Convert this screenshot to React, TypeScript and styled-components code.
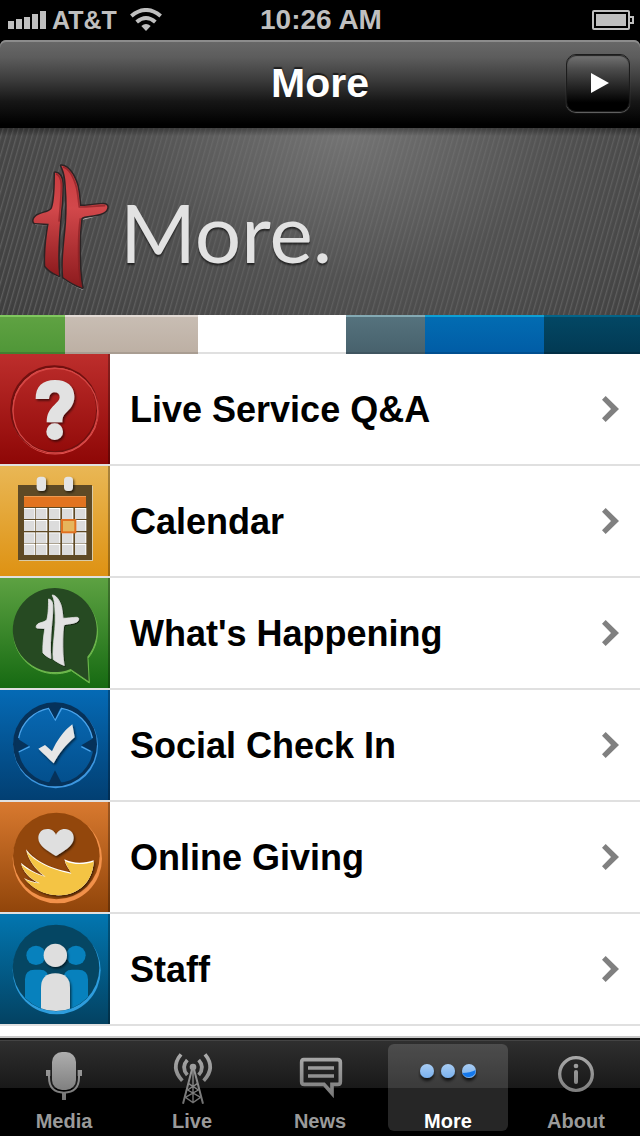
import React from "react";
import styled, { createGlobalStyle } from "styled-components";

const GlobalStyle = createGlobalStyle`
  * { box-sizing: border-box; }
  body {
    margin: 0;
    background: #000;
    font-family: "Liberation Sans", Arial, sans-serif;
  }
`;

const Screen = styled.div`
  display: flex;
  flex-direction: column;
  height: 100vh;
  background: #000;
`;

const StatusBar = styled.div`
  flex: none;
  display: grid;
  grid-template-columns: 1fr auto 1fr;
  align-items: center;
  height: 40px;
  padding: 0 6px 0 8px;
  color: #bfbfbf;
  font-size: 28px;
  font-weight: bold;
`;

const Carrier = styled.div`
  display: flex;
  align-items: center;
  gap: 6px;
  font-size: 25px;
`;

const WifiIcon = styled.svg`
  margin-left: 7px;
`;

const BatteryIcon = styled.svg`
  justify-self: end;
`;

const NavBar = styled.header`
  flex: none;
  display: grid;
  grid-template-columns: 1fr auto 1fr;
  align-items: center;
  height: 88px;
  padding: 0 10px 2px;
  border-radius: 6px 6px 0 0;
  background: linear-gradient(#696969, #5c5c5c 20%, #3c3c3c 45%, #161616 70%, #000 96%);
  box-shadow: inset 0 2px 0 #8c8c8c;
`;

const NavTitle = styled.h1`
  grid-column: 2;
  margin: 0;
  color: #fff;
  font-size: 41px;
  line-height: 48px;
  text-shadow: 0 -2px 1px rgba(0, 0, 0, 0.6);
`;

const PlayButton = styled.button`
  justify-self: end;
  display: grid;
  place-items: center;
  width: 64px;
  height: 58px;
  padding: 0 0 0 3px;
  border: 1px solid #1c1c1c;
  border-radius: 10px;
  background: linear-gradient(#747474, #4c4c4c 25%, #202020 60%, #000 85%);
  box-shadow: 0 1px 1px #6a6a6a, inset 0 1px 1px #222;
`;

const Banner = styled.section`
  flex: none;
  display: flex;
  align-items: center;
  height: 187px;
  padding: 6px 20px 0;
  background:
    linear-gradient(rgba(0, 0, 0, 0.35), transparent 8px),
    radial-gradient(ellipse 420px 300px at 54% 0, rgba(126, 126, 126, 0.85), rgba(94, 94, 94, 0.6) 50%, rgba(74, 74, 74, 0.1)),
    repeating-linear-gradient(106deg, #3e3e3e 0 2px, #606060 3px, #484848 4px, #3e3e3e 5px);
`;

const BannerTitle = styled.h2`
  margin: 0;
  padding-top: 12px;
  color: #e2e2e2;
  font-family: Lato, "Liberation Sans", sans-serif;
  font-size: 82px;
  font-weight: 400;
  line-height: 96px;
  text-shadow: 0 2px 2px rgba(0, 0, 0, 0.6);
`;

const Strip = styled.div`
  flex: none;
  display: flex;
  height: 39px;
`;

const Swatch = styled.div<{ $span: number; $edge: string; $from: string; $to: string; $base: string }>`
  flex: ${(p) => p.$span} 1 0;
  border-top: 2px solid ${(p) => p.$edge};
  border-bottom: 2px solid ${(p) => p.$base};
  background: linear-gradient(${(p) => p.$from}, ${(p) => p.$to});
`;

const Menu = styled.ul`
  flex: 1 1 0;
  min-height: 0;
  overflow: hidden;
  margin: 0;
  padding: 0;
  list-style: none;
  background: #fff;
`;

const MenuItem = styled.li`
  border-bottom: 2px solid #e0e0e0;
`;

const MenuLink = styled.a`
  display: flex;
  align-items: center;
  gap: 20px;
  padding-right: 20px;
  color: #000;
  text-decoration: none;
`;

const IconTile = styled.span<{ $from: string; $to: string }>`
  flex: none;
  display: block;
  width: 110px;
  height: 110px;
  background: linear-gradient(${(p) => p.$from}, ${(p) => p.$to});
  box-shadow: inset -2px 0 0 rgba(0, 0, 0, 0.28);
`;

const TileArt = styled.svg`
  display: block;
  width: 110px;
  height: 110px;
`;

const MenuLabel = styled.span`
  flex: 1;
  padding-top: 2px;
  font-size: 36px;
  font-weight: bold;
  line-height: 44px;
`;

const TabBar = styled.nav`
  flex: none;
  display: flex;
  height: 100px;
  padding: 8px 0 5px;
  background: linear-gradient(
    #c8c8c8 0 2px,
    #141414 2px 4px,
    #444 4px 5px,
    #2f2f2f 5px,
    #191919 52px,
    #000 52px
  );
`;

const Tab = styled.a<{ $active?: boolean }>`
  flex: 1 1 0;
  display: flex;
  flex-direction: column;
  align-items: center;
  margin: 0 4px;
  padding-top: 2px;
  border-radius: 6px;
  color: ${(p) => (p.$active ? "#fff" : "#9a9a9a")};
  background: ${(p) => (p.$active ? "rgba(255, 255, 255, 0.15)" : "none")};
  font-size: 20px;
  font-weight: bold;
  line-height: 20px;
  text-decoration: none;
`;

const TabArt = styled.svg`
  flex: none;
  display: block;
  width: 60px;
  height: 60px;
  margin-bottom: 5px;
`;

const CROSS_RIGHT =
  "M124 32C145 33 163 60 172 92C177 112 178 135 180 153C200 154 230 148 250 148C262 148 264 155 260 163C258 172 240 178 220 181C205 183 190 184 184 190C178 230 178 290 180 340C182 370 184 385 187 398C170 393 145 378 130 367C126 330 130 290 134 250C140 200 142 150 138 100C137 75 135 55 124 32Z";
const CROSS_LEFT =
  "M105 53C117 54 126 65 127 85C128 120 124 160 120 200C116 250 112 310 117 362C105 357 85 345 76 333C74 300 78 250 86 206L44 204C38 200 40 190 50 182C70 172 90 172 96 160C103 140 105 100 105 53Z";

const Logo = () => (
  <svg width="100" height="140" viewBox="0 0 300 420" aria-hidden="true">
    <defs>
      <linearGradient id="logoRed" x1="0" y1="0" x2="0" y2="1">
        <stop offset="0" stopColor="#c83c40" />
        <stop offset="0.35" stopColor="#d2484b" />
        <stop offset="1" stopColor="#8c1a1d" />
      </linearGradient>
    </defs>
    <g fill="none" stroke="#a8a8a8" strokeWidth="4" strokeLinecap="round">
      <path d="M46 208L84 209M190 192C205 188 240 182 258 170M132 371C150 384 170 396 188 402M80 338C92 350 105 360 117 365" />
    </g>
    <g fill="url(#logoRed)" stroke="#2c2425" strokeWidth="9" strokeLinejoin="round" paintOrder="stroke">
      <path d={CROSS_LEFT} />
      <path d={CROSS_RIGHT} />
    </g>
    <g fill="none" stroke="#7e1c20" strokeWidth="5" opacity="0.6">
      <path d="M108 56C120 62 124 75 124 90C124 120 120 165 117 200" />
      <path d="M129 36C148 41 161 68 169 96C174 115 175 140 178 156C200 157 230 152 256 152" />
      <path d="M181 190C175 230 175 290 177 340L183 394" />
    </g>
  </svg>
);

const Relief = () => (
  <filter id="relief" x="-20%" y="-20%" width="150%" height="150%">
    <feDropShadow dx="4" dy="5" stdDeviation="3" floodColor="#000" floodOpacity="0.6" />
  </filter>
);

const QuestionArt = () => (
  <TileArt viewBox="0 12 330 330" aria-hidden="true">
    <defs>
      <Relief />
    </defs>
    <circle cx="165" cy="182" r="129" fill="none" stroke="#e0504e" strokeWidth="5" />
    <circle cx="163" cy="178" r="129" fill="none" stroke="#72100f" strokeWidth="7" />
    <circle cx="166" cy="182" r="127" fill="none" stroke="#d64644" strokeWidth="4" />
    <g fill="#e2e2e2" filter="url(#relief)">
      <path d="M107 147C106 110 128 90 165 90C200 90 223 108 223 140C223 165 208 178 198 188C190 196 187 203 187 217L140 217C140 190 150 178 163 165C172 156 179 150 179 142C179 132 173 127 164 127C154 127 148 134 147 147Z" />
      <circle cx="164" cy="245" r="25" />
    </g>
  </TileArt>
);

const CELL_X = [72, 108, 147, 186, 225];
const CELL_Y = [474, 510, 547, 582];

const CalendarArt = () => (
  <TileArt viewBox="0 348 330 330" aria-hidden="true">
    <path d="M57 408H279V633H57Z" fill="#d9cba8" />
    <path d="M54 405H276V630H54Z" fill="#5f4a25" />
    <path d="M72 438H258V471H72Z" fill="#e27420" />
    <path d="M72 438H258V441H72Z" fill="#f09a50" />
    {CELL_Y.map((y) =>
      CELL_X.map((x) => (
        <g key={`${x}-${y}`}>
          <rect x={x} y={y} width="34" height="33" fill="#fff" />
          <rect x={x} y={y + 3} width="31" height="30" fill="#dcdcdc" />
        </g>
      ))
    )}
    <rect x="186" y="510" width="40" height="37" fill="#e6b55c" stroke="#e07020" strokeWidth="6" />
    <g fill="#e4e4e4" filter="url(#relief)">
      <rect x="110" y="380" width="28" height="43" rx="11" />
      <rect x="192" y="380" width="27" height="43" rx="11" />
    </g>
  </TileArt>
);

const BUBBLE = "M262 242A126 126 0 1 0 212 279L266 316Z";

const HappeningArt = () => (
  <TileArt viewBox="0 6 330 330" aria-hidden="true">
    <path d={BUBBLE} transform="translate(2 5)" fill="#6cb74c" stroke="#6cb74c" strokeWidth="3" />
    <path d={BUBBLE} fill="#264a22" />
    <g transform="translate(85 38.5) scale(0.577)" fill="#e2e2e2" stroke="#e2e2e2" strokeWidth="4" filter="url(#relief)">
      <path d={CROSS_LEFT} />
      <path d={CROSS_RIGHT} />
    </g>
  </TileArt>
);

const CheckInArt = () => (
  <TileArt viewBox="0 342 330 330" aria-hidden="true">
    <defs>
      <linearGradient id="dial" x1="0" y1="0" x2="0" y2="1">
        <stop offset="0" stopColor="#0868b2" />
        <stop offset="1" stopColor="#034f8c" />
      </linearGradient>
    </defs>
    <circle cx="167" cy="510" r="127" fill="#3d97e0" />
    <circle cx="165" cy="505" r="126" fill="#06325a" />
    <circle cx="167" cy="508" r="113" fill="url(#dial)" />
    <g fill="none" stroke="#4ba3ea" strokeWidth="4">
      <path d="M56 486A113 113 0 0 1 146 397L166 432L185 397A113 113 0 0 1 277 486" />
      <path d="M56 528L89 512M244 512L272 526" />
    </g>
    <g fill="#06325a">
      <path d="M144 390L165 429L184 390Z" />
      <path d="M146 622L165 583L185 622Z" />
      <path d="M46 484L86 509L46 530Z" />
      <path d="M285 484L244 508L285 530Z" />
    </g>
    <path
      d="M115 518L135 507L156 526C170 495 190 465 217 445L224 484C198 505 177 533 161 562C146 548 132 534 115 518Z"
      fill="#e6e6e6"
      filter="url(#relief)"
    />
  </TileArt>
);

const WING =
  "M78 148C100 178 140 203 214 218C205 206 197 195 193 178C220 192 255 190 281 181C280 240 240 286 175 286C130 284 95 262 72 234C85 242 100 246 114 248C90 235 68 215 63 188C85 208 110 220 132 228C105 207 85 180 78 148Z";

const GivingArt = () => (
  <TileArt viewBox="0 6 330 330" aria-hidden="true">
    <circle cx="172" cy="176" r="134" fill="#f2914a" />
    <circle cx="169" cy="168" r="130" fill="#93470c" />
    <path d={WING} fill="#fff" filter="url(#relief)" />
    <path
      d="M80 155C105 184 148 208 214 221C208 209 200 198 195 183C222 196 254 194 281 185C279 240 240 286 175 286C130 285 96 264 74 237C88 244 104 250 120 250C94 238 72 219 64 194C86 212 112 224 137 230C110 211 89 186 80 155Z"
      fill="#f4c444"
    />
    <path
      d="M168 168C145 154 115 138 115 114C115 97 127 87 142 87C156 87 165 95 168 105C171 95 181 87 195 87C210 87 221 98 221 114C221 138 191 154 168 168Z"
      fill="#dfdfdf"
      filter="url(#relief)"
    />
  </TileArt>
);

const StaffArt = () => (
  <TileArt viewBox="0 342 330 330" aria-hidden="true">
    <defs>
      <clipPath id="staffDisc">
        <circle cx="168" cy="503" r="130" />
      </clipPath>
    </defs>
    <circle cx="170" cy="511" r="132" fill="#2e9ddd" />
    <circle cx="168" cy="504" r="130" fill="#054663" />
    <g clipPath="url(#staffDisc)" fill="#0781bd">
      <circle cx="108" cy="466" r="29" />
      <circle cx="228" cy="466" r="29" />
      <path d="M75 650V538Q75 509 104 509H120Q146 509 146 538V650Z" />
      <path d="M190 650V538Q190 509 216 509H234Q264 509 264 538V650Z" />
      <g fill="#dedede" filter="url(#relief)">
        <circle cx="166" cy="466" r="35" />
        <path d="M123 650V564Q123 520 166 520Q210 520 210 564V650Z" />
      </g>
    </g>
  </TileArt>
);

const Metal = ({ id }: { id: string }) => (
  <linearGradient id={id} gradientUnits="userSpaceOnUse" x1="0" y1="90" x2="0" y2="250">
    <stop offset="0" stopColor="#b0b0b0" />
    <stop offset="1" stopColor="#707070" />
  </linearGradient>
);

const MediaArt = () => (
  <TabArt viewBox="102 78 180 180" aria-hidden="true">
    <defs>
      <Metal id="metalMedia" />
    </defs>
    <rect x="156" y="96" width="72" height="114" rx="30" fill="url(#metalMedia)" />
    <path d="M147 160V172Q147 218 192 218Q237 218 237 172V160" fill="none" stroke="url(#metalMedia)" strokeWidth="6" />
    <path d="M138 150H151V168H138ZM233 150H246V168H233ZM186 218H198V240H186Z" fill="url(#metalMedia)" />
  </TabArt>
);

const LiveArt = () => (
  <TabArt viewBox="486 78 180 180" aria-hidden="true">
    <defs>
      <Metal id="metalLive" />
    </defs>
    <g fill="none" stroke="url(#metalLive)">
      <path d="M543 103Q510 143 547 182M615 103Q648 143 611 182" strokeWidth="11" />
      <path d="M562 120Q542 142 562 165M596 120Q616 142 596 165" strokeWidth="11" />
      <path d="M576 148L549 251M582 148L609 251" strokeWidth="6" />
      <path d="M579 148V248M565 190L595 210L556 232L579 248L602 232L563 210L593 190" strokeWidth="4" />
    </g>
    <circle cx="579" cy="141" r="10" fill="url(#metalLive)" />
  </TabArt>
);

const NewsArt = () => (
  <TabArt viewBox="870 78 180 180" aria-hidden="true">
    <defs>
      <Metal id="metalNews" />
    </defs>
    <g fill="none" stroke="url(#metalNews)" strokeWidth="11">
      <path d="M911 119H1013Q1021 119 1021 127V185Q1021 193 1013 193H996V220L972 193H913Q905 193 905 185V127Q905 119 911 119Z" />
      <path d="M924 144H1002M924 168H1002" />
    </g>
  </TabArt>
);

const MoreArt = () => (
  <TabArt viewBox="294 78 180 180" aria-hidden="true">
    <defs>
      <linearGradient id="dot" x1="0" y1="0" x2="0" y2="1">
        <stop offset="0" stopColor="#a9cdf3" />
        <stop offset="1" stopColor="#79b0ee" />
      </linearGradient>
      <filter id="dotShadow" x="-30%" y="-30%" width="160%" height="200%">
        <feDropShadow dx="0" dy="9" stdDeviation="5" floodColor="#000" floodOpacity="0.7" />
      </filter>
    </defs>
    <g fill="url(#dot)" filter="url(#dotShadow)">
      <circle cx="321" cy="153" r="21" />
      <circle cx="384" cy="153" r="21" />
      <circle cx="447" cy="153" r="21" />
    </g>
    <path d="M427 159Q450 159 467 150A21 21 0 0 1 427 159Z" fill="#1478ec" />
  </TabArt>
);

const AboutArt = () => (
  <TabArt viewBox="678 78 180 180" aria-hidden="true">
    <defs>
      <Metal id="metalAbout" />
    </defs>
    <circle cx="768" cy="162" r="49" fill="none" stroke="url(#metalAbout)" strokeWidth="10" />
    <circle cx="768" cy="138" r="7" fill="url(#metalAbout)" />
    <rect x="762" y="150" width="12" height="42" rx="6" fill="url(#metalAbout)" />
  </TabArt>
);

const swatches = [
  { span: 65, edge: "#80c85e", from: "#5fa242", to: "#509738", base: "#438030" },
  { span: 133, edge: "#e2dad4", from: "#c8bdb3", to: "#bdb0a4", base: "#a99d92" },
  { span: 148, edge: "#ffffff", from: "#ffffff", to: "#ffffff", base: "#e0e0e0" },
  { span: 79, edge: "#84aab4", from: "#55727d", to: "#48626d", base: "#3f5560" },
  { span: 119, edge: "#0ea0d4", from: "#026cb2", to: "#015da6", base: "#015090" },
  { span: 96, edge: "#046488", from: "#034764", to: "#023a54", base: "#022f46" },
];

const items = [
  { label: "Live Service Q&A", from: "#bd2e2c", to: "#8e0706", Art: QuestionArt },
  { label: "Calendar", from: "#e9b755", to: "#de9213", Art: CalendarArt },
  { label: "What's Happening", from: "#5da242", to: "#166a12", Art: HappeningArt },
  { label: "Social Check In", from: "#056ab5", to: "#023f72", Art: CheckInArt },
  { label: "Online Giving", from: "#d8792f", to: "#91450a", Art: GivingArt },
  { label: "Staff", from: "#0276b0", to: "#034262", Art: StaffArt },
];

const tabs = [
  { label: "Media", Art: MediaArt },
  { label: "Live", Art: LiveArt },
  { label: "News", Art: NewsArt },
  { label: "More", Art: MoreArt, active: true },
  { label: "About", Art: AboutArt },
];

export default function App() {
  return (
    <Screen>
      <GlobalStyle />
      <StatusBar>
        <Carrier>
          <svg width="38" height="18" viewBox="0 0 38 18" fill="#bfbfbf" aria-hidden="true">
            <path d="M0 10h6v8H0zM8 8h6v10H8zM16 6h6v12h-6zM24 3h6v15h-6zM32 0h6v18h-6z" />
          </svg>
          <span>AT&amp;T</span>
          <WifiIcon width="32" height="24" viewBox="0 0 96 72" aria-hidden="true">
            <g fill="none" stroke="#bfbfbf" strokeWidth="12">
              <path d="M4 24Q48 -12 92 24" />
              <path d="M20 42Q48 18 76 42" />
            </g>
            <path d="M34 54Q48 42 62 54L48 69Z" fill="#bfbfbf" />
          </WifiIcon>
        </Carrier>
        <span>10:26 AM</span>
        <BatteryIcon width="42" height="20" viewBox="0 0 42 20" aria-hidden="true">
          <rect x="1" y="1" width="36" height="18" rx="1" fill="none" stroke="#bfbfbf" strokeWidth="2" />
          <rect x="4" y="4" width="30" height="12" fill="#bfbfbf" />
          <path d="M38 7h3v6h-3" fill="none" stroke="#bfbfbf" strokeWidth="2" />
        </BatteryIcon>
      </StatusBar>

      <NavBar>
        <NavTitle>More</NavTitle>
        <PlayButton type="button" aria-label="Play">
          <svg width="18" height="20" viewBox="0 0 18 20" aria-hidden="true">
            <path d="M0 0L18 10L0 20Z" fill="#fff" />
          </svg>
        </PlayButton>
      </NavBar>

      <Banner>
        <Logo />
        <BannerTitle>More.</BannerTitle>
      </Banner>

      <Strip>
        {swatches.map((s) => (
          <Swatch key={s.edge} $span={s.span} $edge={s.edge} $from={s.from} $to={s.to} $base={s.base} />
        ))}
      </Strip>

      <Menu>
        {items.map(({ label, from, to, Art }) => (
          <MenuItem key={label}>
            <MenuLink href="#">
              <IconTile $from={from} $to={to}>
                <Art />
              </IconTile>
              <MenuLabel>{label}</MenuLabel>
              <svg width="18" height="26" viewBox="0 0 54 78" aria-hidden="true">
                <path d="M11 0L0 11L27 39L0 67L11 78L51 39Z" fill="#808080" />
              </svg>
            </MenuLink>
          </MenuItem>
        ))}
      </Menu>

      <TabBar>
        {tabs.map(({ label, Art, active }) => (
          <Tab key={label} href="#" $active={active} aria-current={active ? "page" : undefined}>
            <Art />
            {label}
          </Tab>
        ))}
      </TabBar>
    </Screen>
  );
}
